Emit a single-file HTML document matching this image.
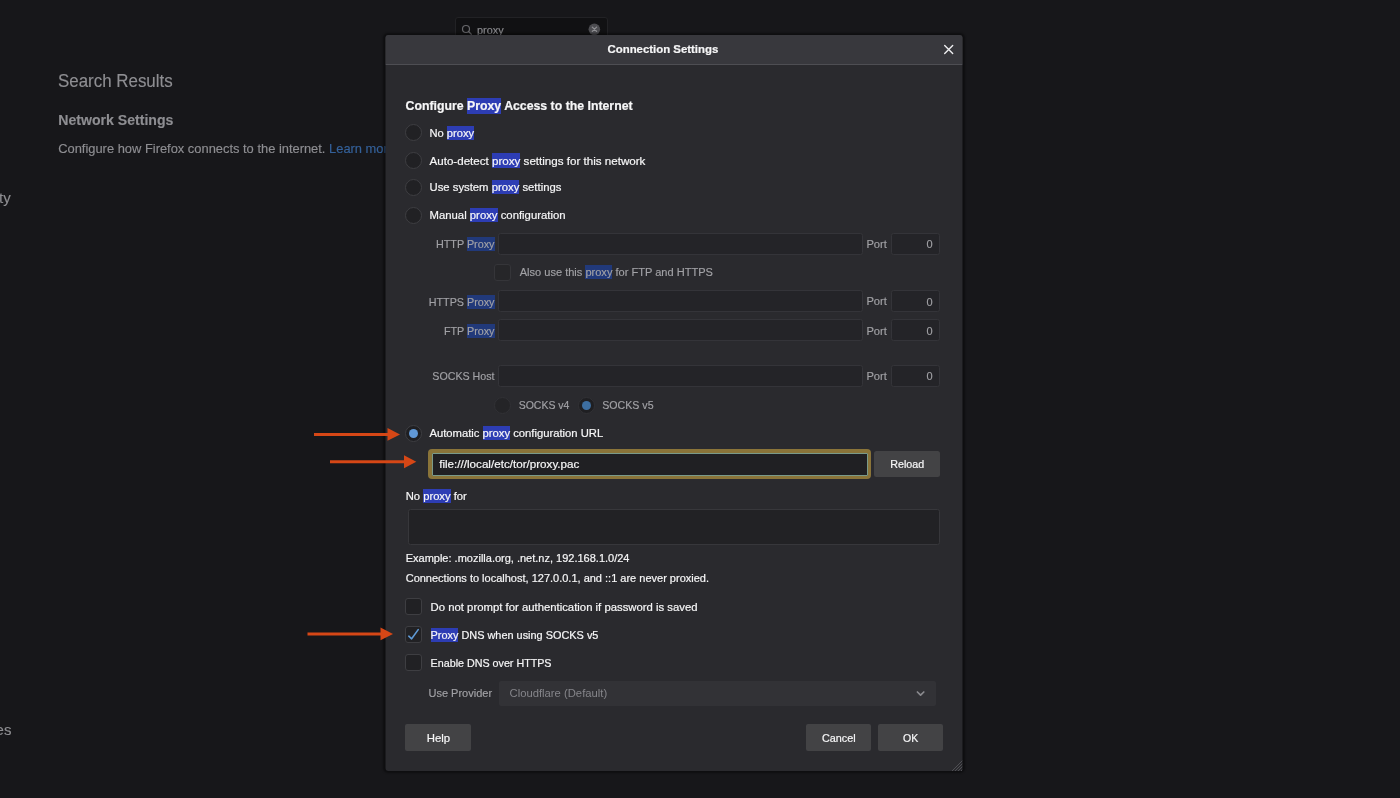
<!DOCTYPE html>
<html><head><meta charset="utf-8">
<style>
*{box-sizing:border-box;margin:0;padding:0}
html,body{width:1400px;height:798px;overflow:hidden;background:#17171a;font-family:"Liberation Sans",sans-serif;}
#root{position:absolute;left:0;top:0;width:1400px;height:798px;will-change:transform}
.a{position:absolute;white-space:nowrap;line-height:1}
.bg{color:#8e8e92;-webkit-text-stroke:0.15px #8e8e92}
.t{color:#f6f6f7;-webkit-text-stroke:0.2px #f6f6f7}
.d{color:#a2a2a6;-webkit-text-stroke:0.15px #a2a2a6}
.hl{background:#2d3db4;padding:1px 0 1px}
.hld{background:#21397a;padding:1px 0 1px}
.inp{position:absolute;background:#242428;border:1px solid #343439;border-radius:2.5px}
.radio{position:absolute;width:17px;height:17px;border-radius:50%;background:#212124;border:1px solid #3e3e42}
.cb{position:absolute;width:17px;height:17px;border-radius:3px;background:#212124;border:1px solid #3e3e42}
.btn{position:absolute;background:#434345;border-radius:2.5px}
</style></head>
<body><div id="root">
<div class="a bg" style="left:-9.3px;top:190.25px;font-size:15px;">rity</div>
<div class="a bg" style="left:-33.6px;top:722.45px;font-size:15px;">hemes</div>
<div class="a bg" style="left:58px;top:71.75px;font-size:18.3px;transform:scaleX(0.925);transform-origin:0 0;">Search Results</div>
<div class="a bg" style="left:58.3px;top:113.22px;font-size:14.1px;font-weight:700;">Network Settings</div>
<div class="a bg" style="left:58.2px;top:143.03px;font-size:12.9px;">Configure how Firefox connects to the internet. <span style="color:#34619a;-webkit-text-stroke:0.15px #34619a">Learn more</span></div>
<div style="position:absolute;left:455px;top:17px;width:153px;height:26px;background:#111113;border:1px solid #222225;border-radius:3px"></div>
<svg style="position:absolute;left:460.5px;top:23.6px" width="12" height="12" viewBox="0 0 12 12"><circle cx="5" cy="5" r="3.5" fill="none" stroke="#66666a" stroke-width="1.2"/><line x1="7.5" y1="7.5" x2="10.3" y2="10.3" stroke="#66666a" stroke-width="1.3" stroke-linecap="round"/></svg>
<div class="a bg" style="left:477px;top:24.94px;font-size:10.9px;color:#8a8a8e">proxy</div>
<svg style="position:absolute;left:588px;top:23px" width="13" height="13" viewBox="0 0 13 13"><circle cx="6.35" cy="6.35" r="5.8" fill="#4c4c50"/><path d="M4.3 4.1L8.6 8.4M8.6 4.1L4.3 8.4" stroke="#8e8e92" stroke-width="1.3" stroke-linecap="round"/></svg>
<div style="position:absolute;left:385px;top:35px;width:577px;height:736px;transform:translateX(0.5px);background:#2a2a2e;border-radius:3px;box-shadow:0 0 2px 2px rgba(0,0,0,0.4)"><div style="position:absolute;left:0;top:0;width:577px;height:30px;background:#38383d;border-bottom:1px solid #4e4e53;border-radius:3px 3px 0 0"></div><svg style="position:absolute;left:556.5px;top:9px" width="12" height="12" viewBox="0 0 12 12"><path d="M2.2 1.6L10.2 9.6M10.2 1.6L2.2 9.6" stroke="#ececee" stroke-width="1.4" stroke-linecap="round"/></svg><svg style="position:absolute;left:566px;top:724.5px" width="11" height="11.5" viewBox="0 0 11 11.5"><path d="M0 11.5L11 0.5M3 11.5L11 3.5M6 11.5L11 6.5M9 11.5L11 9.5" stroke="#4f4f54" stroke-width="1"/></svg></div>
<div class="a t" style="left:607.5px;top:43.71px;font-size:11.4px;font-weight:700;">Connection Settings</div>
<div class="a t" style="left:405.5px;top:100.05px;font-size:12.3px;font-weight:700;">Configure <span class="hl">Proxy</span> Access to the Internet</div>
<div class="radio" style="left:405px;top:124px"></div>
<div class="a t" style="left:429.5px;top:127.52px;font-size:11.15px;">No <span class="hl">proxy</span></div>
<div class="radio" style="left:405px;top:152px"></div>
<div class="a t" style="left:429.5px;top:154.74px;font-size:11.6px;">Auto-detect <span class="hl">proxy</span> settings for this network</div>
<div class="radio" style="left:405px;top:179px"></div>
<div class="a t" style="left:429.5px;top:182.40px;font-size:11.3px;">Use system <span class="hl">proxy</span> settings</div>
<div class="radio" style="left:405px;top:207px"></div>
<div class="a t" style="left:429.5px;top:209.66px;font-size:11.34px;">Manual <span class="hl">proxy</span> configuration</div>
<div class="a d" style="right:905.5px;top:239.32px;font-size:10.8px;">HTTP <span class="hld">Proxy</span></div>
<div class="inp" style="left:498px;top:233px;width:365px;height:22px"></div>
<div class="a d" style="left:866.4px;top:238.98px;font-size:11.2px;">Port</div>
<div class="inp" style="left:890.5px;top:233px;width:49px;height:22px"></div>
<div class="a d" style="right:467.5px;top:239.15px;font-size:11px;">0</div>
<div class="a d" style="right:905.5px;top:296.86px;font-size:10.75px;">HTTPS <span class="hld">Proxy</span></div>
<div class="inp" style="left:498px;top:290px;width:365px;height:22px"></div>
<div class="a d" style="left:866.4px;top:296.48px;font-size:11.2px;">Port</div>
<div class="inp" style="left:890.5px;top:290px;width:49px;height:22px"></div>
<div class="a d" style="right:467.5px;top:296.65px;font-size:11px;">0</div>
<div class="a d" style="right:905.5px;top:326.36px;font-size:10.75px;">FTP <span class="hld">Proxy</span></div>
<div class="inp" style="left:498px;top:319px;width:365px;height:22px"></div>
<div class="a d" style="left:866.4px;top:325.98px;font-size:11.2px;">Port</div>
<div class="inp" style="left:890.5px;top:319px;width:49px;height:22px"></div>
<div class="a d" style="right:467.5px;top:326.15px;font-size:11px;">0</div>
<div class="a d" style="right:905.5px;top:371.44px;font-size:10.66px;">SOCKS Host</div>
<div class="inp" style="left:498px;top:365px;width:365px;height:22px"></div>
<div class="a d" style="left:866.4px;top:370.98px;font-size:11.2px;">Port</div>
<div class="inp" style="left:890.5px;top:365px;width:49px;height:22px"></div>
<div class="a d" style="right:467.5px;top:371.15px;font-size:11px;">0</div>
<div class="cb" style="left:494px;top:264px;background:#262629;border-color:#353539"></div>
<div class="a d" style="left:519.7px;top:267.10px;font-size:11.06px;">Also use this <span class="hld">proxy</span> for FTP and HTTPS</div>
<div class="radio" style="left:494px;top:397px;background:#242427;border-color:#313135"></div>
<div class="a d" style="left:518.7px;top:400.47px;font-size:10.5px;">SOCKS v4</div>
<div class="radio" style="left:578px;top:397px;background:#1f1f22;border-color:#313135"></div>
<div style="position:absolute;left:582px;top:401px;width:9px;height:9px;border-radius:50%;background:#3d6ea0"></div>
<div class="a d" style="left:602.3px;top:400.39px;font-size:10.6px;">SOCKS v5</div>
<div class="radio" style="left:405px;top:425px;background:#1f1f22;border-color:#3e3e42"></div>
<div style="position:absolute;left:408.5px;top:428.8px;width:9.5px;height:9.5px;border-radius:50%;background:#6098d6"></div>
<div class="a t" style="left:429.4px;top:428.03px;font-size:11.26px;">Automatic <span class="hl">proxy</span> configuration URL</div>
<div style="position:absolute;left:428px;top:448.8px;width:443px;height:30.3px;border-radius:4px;background:#8a7439"></div>
<div style="position:absolute;left:431.5px;top:452.5px;width:436px;height:23px;border-radius:1px;background:#202023;border:1px solid #7a9a8a"></div>
<div class="a t" style="left:439.2px;top:458.00px;font-size:11.65px;">file:///local/etc/tor/proxy.pac</div>
<div style="position:absolute;left:874.3px;top:451px;width:65.5px;height:26.2px;background:#434345;border-radius:2.5px"></div>
<div class="a t" style="left:890.3px;top:458.90px;font-size:10.7px;">Reload</div>
<div class="a t" style="left:405.7px;top:490.76px;font-size:11.22px;">No <span class="hl">proxy</span> for</div>
<div class="inp" style="left:408px;top:509px;width:532px;height:36px;background:#222225;border-color:#37373b"></div>
<div class="a t" style="left:405.7px;top:552.74px;font-size:11.01px;">Example: .mozilla.org, .net.nz, 192.168.1.0/24</div>
<div class="a t" style="left:405.7px;top:572.65px;font-size:11.0px;">Connections to localhost, 127.0.0.1, and ::1 are never proxied.</div>
<div class="cb" style="left:405px;top:598px"></div>
<div class="a t" style="left:430.6px;top:601.66px;font-size:11.34px;">Do not prompt for authentication if password is saved</div>
<div class="cb" style="left:405px;top:626px"></div>
<svg style="position:absolute;left:405px;top:626px" width="17" height="17" viewBox="0 0 17 17"><path d="M3.8 10.2L6.65 12.8L13.2 3.6" fill="none" stroke="#5f9ad6" stroke-width="1.6" stroke-linecap="round" stroke-linejoin="round"/></svg>
<div class="a t" style="left:430.5px;top:629.93px;font-size:10.91px;"><span class="hl">Proxy</span> DNS when using SOCKS v5</div>
<div class="cb" style="left:405px;top:654px"></div>
<div class="a t" style="left:430.6px;top:657.69px;font-size:10.72px;">Enable DNS over HTTPS</div>
<div class="a d" style="left:428.5px;top:687.95px;font-size:11.0px;">Use Provider</div>
<div style="position:absolute;left:499.1px;top:680.6px;width:436.8px;height:25.6px;background:#323236;border-radius:2px"></div>
<div class="a a" style="left:509.6px;top:687.74px;font-size:11.25px;color:#85858a">Cloudflare (Default)</div>
<svg style="position:absolute;left:915px;top:689px" width="11" height="9" viewBox="0 0 11 9"><path d="M2.4 3L5.6 6.2L8.8 3" fill="none" stroke="#8a8a8e" stroke-width="1.7" stroke-linecap="round" stroke-linejoin="round"/></svg>
<div style="position:absolute;left:405.3px;top:724.3px;width:65.5px;height:26.7px;background:#434345;border-radius:2px"></div>
<div class="a t" style="left:426.8px;top:733.03px;font-size:11.38px;">Help</div>
<div style="position:absolute;left:806px;top:724.3px;width:65px;height:26.7px;background:#434345;border-radius:2px"></div>
<div class="a t" style="left:821.9px;top:732.79px;font-size:10.83px;">Cancel</div>
<div style="position:absolute;left:878px;top:724.3px;width:65px;height:26.7px;background:#434345;border-radius:2px"></div>
<div class="a t" style="left:903px;top:733.06px;font-size:10.52px;">OK</div>
<svg style="position:absolute;left:0;top:0" width="1400" height="798">
<g fill="#d64716" stroke="#d64716">
<line x1="314" y1="434.4" x2="389" y2="434.4" stroke-width="3"/><path d="M387.5 428L400 434.4L387.5 440.8Z" stroke="none"/>
<line x1="330" y1="461.8" x2="405" y2="461.8" stroke-width="3"/><path d="M404 455.3L416.3 461.8L404 468.3Z" stroke="none"/>
<line x1="307.5" y1="633.9" x2="382" y2="633.9" stroke-width="3"/><path d="M380.5 627.5L393 633.9L380.5 640.3Z" stroke="none"/>
</g></svg>
</div></body></html>
